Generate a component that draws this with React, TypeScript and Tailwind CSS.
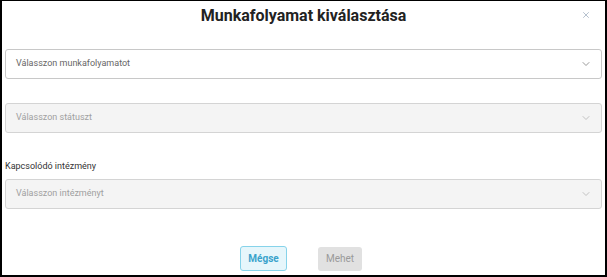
import { ChevronDown, X } from "lucide-react";

interface SelectBoxProps {
  placeholder: string;
  disabled?: boolean;
}

function SelectBox({ placeholder, disabled }: SelectBoxProps) {
  return (
    <div
      className={
        disabled
          ? "flex h-[30px] items-center justify-between rounded-[3px] border border-[#d4d4d4] bg-[#f4f4f4] pl-[10px] pr-[9px]"
          : "flex h-[30px] items-center justify-between rounded-[3px] border border-[#c8c8c8] bg-white pl-[10px] pr-[9px]"
      }
    >
      <span className={disabled ? "text-[9px] text-[#a0a0a0]" : "text-[9px] text-[#666]"}>
        {placeholder}
      </span>
      <ChevronDown
        size={12}
        strokeWidth={1.5}
        className={disabled ? "text-[#b0b0b0]" : "text-[#777]"}
      />
    </div>
  );
}

export default function App() {
  return (
    <div className="h-[277px] w-[607px] overflow-hidden bg-white font-['Roboto',sans-serif]">
      <div className="flex h-full flex-col border-b-2 border-l-2 border-r-2 border-t border-black bg-white">
        <div className="relative flex h-[30px] items-center justify-center">
          <h1 className="text-[16px] font-bold text-[#222]">Munkafolyamat kiválasztása</h1>
          <button className="absolute right-[14px] top-[9px] text-[#8a9bb0]">
            <X size={10} strokeWidth={1.5} />
          </button>
        </div>

        <div className="flex flex-col px-[3px] pt-[18px]">
          <SelectBox placeholder="Válasszon munkafolyamatot" />
          <div className="mt-[24px]">
            <SelectBox placeholder="Válasszon státuszt" disabled />
          </div>
          <div className="mt-[27px] text-[9px] text-[#333]">Kapcsolódó intézmény</div>
          <div className="mt-[5px]">
            <SelectBox placeholder="Válasszon intézményt" disabled />
          </div>
        </div>

        <div className="mt-[37px] flex justify-center gap-[31px] pr-[5px]">
          <button className="h-[25px] w-[47px] rounded-[3px] border border-[#86d3ea] bg-[#e6f6fb] text-[10px] font-bold text-[#3aa3cc]">
            Mégse
          </button>
          <button className="mt-[1px] h-[24px] w-[44px] rounded-[3px] bg-[#e1e1e1] text-[10px] text-[#9a9a9a]">
            Mehet
          </button>
        </div>
      </div>
    </div>
  );
}
